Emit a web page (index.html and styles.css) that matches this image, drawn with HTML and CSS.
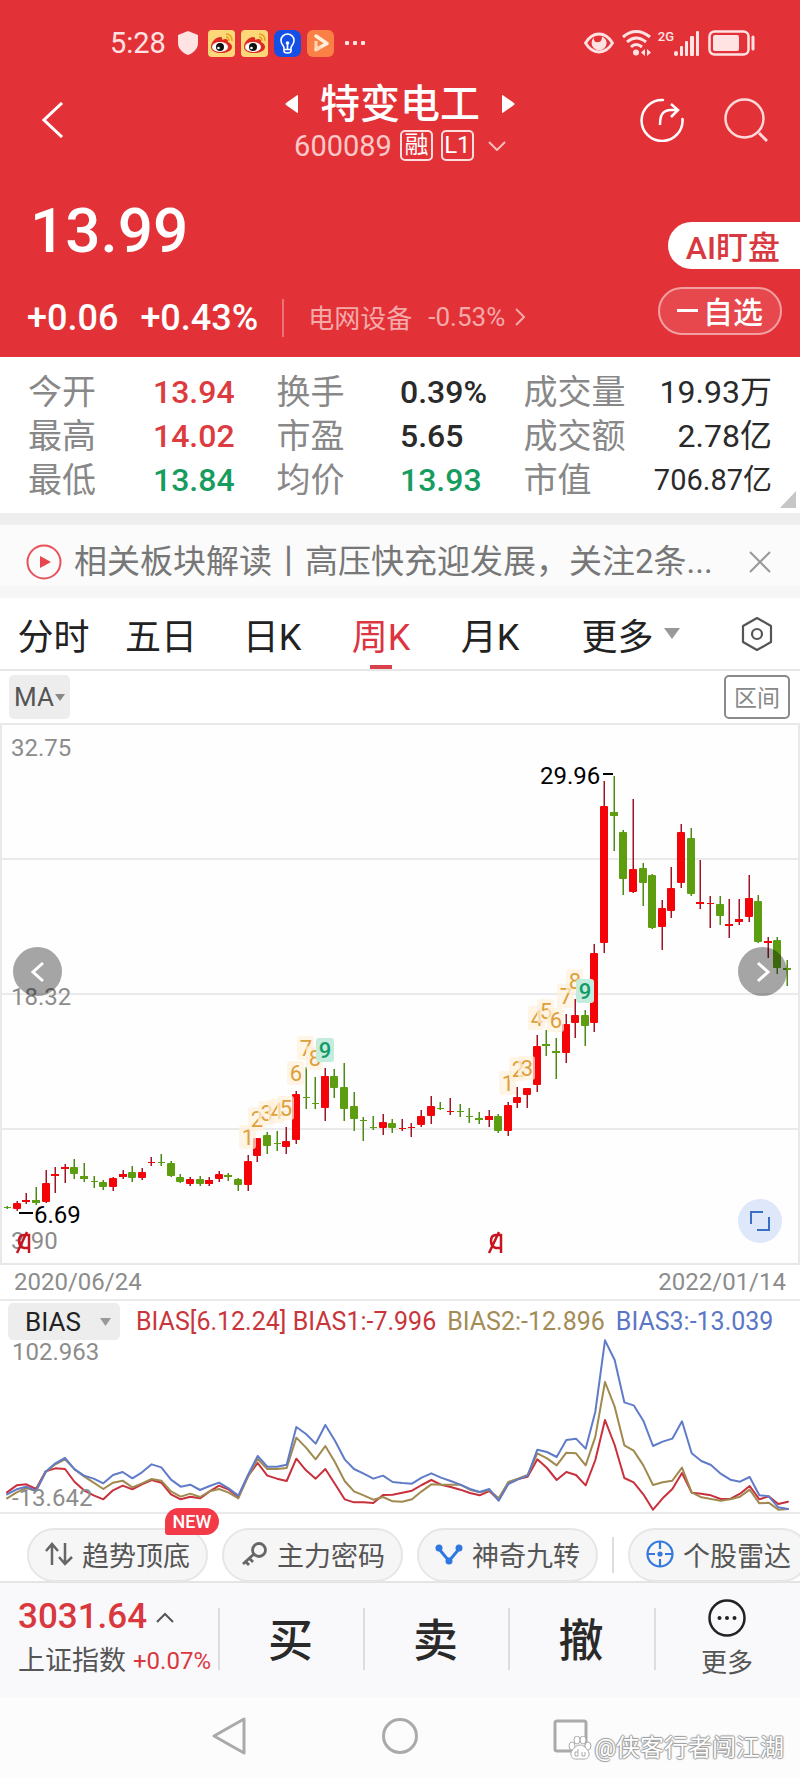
FILE: index.html
```html
<!DOCTYPE html>
<html lang="zh-CN">
<head>
<meta charset="utf-8">
<meta name="viewport" content="width=device-width, initial-scale=1">
<title>特变电工 600089</title>
<link rel="stylesheet" href="styles.css">
</head>
<body>
<header class="hero">
  <div class="status">
    <span class="clock">5:28</span>
    <svg class="shield" width="22" height="26" viewBox="0 0 22 26"><path d="M11 1 21 5V13C21 19 16 23 11 25 6 23 1 19 1 13V5Z" fill="#ffe3e3"/></svg>
    <svg class="app" width="27" height="27" viewBox="0 0 27 27"><use href="#weibo"/></svg>
    <svg class="app" width="27" height="27" viewBox="0 0 27 27"><use href="#weibo"/></svg>
    <svg class="app" width="27" height="27" viewBox="0 0 27 27"><rect width="27" height="27" rx="7" fill="#1450e6"/><path d="M10 18C10 15.500 7 14.500 7 10.500A6.500 6.500 0 0 1 20 10.500C20 14.500 17 15.500 17 18V21Q17 23 13.500 23T10 21ZM10 19.500H17M13.500 19V12" fill="none" stroke="#fff" stroke-width="1.600"/><circle cx="13.500" cy="13" r="1.800" fill="#fff"/></svg>
    <svg class="app" width="27" height="27" viewBox="0 0 27 27"><rect width="27" height="27" rx="6" fill="#fb8045"/><path d="M9 6 20 13.500 9 19.500" fill="none" stroke="#fff0dc" stroke-width="3.500" stroke-linejoin="round" stroke-linecap="round"/><path d="M9 11V20L14 17" fill="none" stroke="#ffd9b8" stroke-width="3" stroke-linejoin="round"/></svg>
    <svg class="dots" width="20" height="6" viewBox="0 0 20 6" fill="#ffe3e3"><rect y="1" width="4" height="4" rx="1"/><rect x="8" y="1" width="4" height="4" rx="1"/><rect x="16" y="1" width="4" height="4" rx="1"/></svg>
    <span class="grow"></span>
    <svg width="30" height="22" viewBox="0 0 30 22"><path d="M1.500 11Q7 2 15 2T28.500 11Q23 20 15 20T1.500 11Z" fill="none" stroke="#ffe3e3" stroke-width="2.800"/><path d="M12 4A7.500 7.500 0 1 0 22 8 Q20 5 18 4.500C18 8 17 10 14 10A3 3 0 0 1 12 4Z" fill="#ffe3e3"/></svg>
    <svg class="wifi" width="30" height="26" viewBox="0 0 30 26"><g fill="none" stroke="#ffe3e3" stroke-width="3"><path d="M1 7Q14-4 28 7"/><path d="M5 12Q14 4 24 12"/><path d="M9 17Q14 12 20 17"/></g><circle cx="14" cy="22.500" r="3" fill="#ffe3e3"/><path d="M23 19V26L19 22.500ZM25 19V26L29 22.500Z" fill="#ffe3e3"/></svg>
    <span class="net">2G</span>
    <svg class="signal" width="26" height="25" viewBox="0 0 26 25" fill="#ffe3e3"><rect y="20" width="4" height="5" rx="2"/><rect x="6" y="15" width="3" height="10" rx="1"/><rect x="11" y="10" width="3" height="15" rx="1"/><rect x="16" y="5" width="4" height="20" rx="1"/><rect x="22" width="3" height="25" rx="1"/></svg>
    <svg width="47" height="26" viewBox="0 0 47 26"><rect x="1.500" y="1.500" width="39" height="23" rx="5" fill="none" stroke="#ffe3e3" stroke-width="2.500"/><rect x="5" y="5" width="26" height="16" rx="2" fill="#ffe3e3"/><path d="M45 7V19" stroke="#ffe3e3" stroke-width="3" stroke-linecap="round"/></svg>
  </div>
  <div class="titlebar">
    <button class="plain back" aria-label="返回"><svg width="22" height="36" viewBox="0 0 22 36"><path d="M20 1 2 18 20 35" fill="none" stroke="#fff" stroke-width="3"/></svg></button>
    <div class="heading">
      <div class="name-row">
        <button class="plain" aria-label="上一只"><svg width="14" height="20" viewBox="0 0 14 20"><path d="M13 2V18Q13 20 11 18L1 11Q0 10 1 9L11 2Q13 0 13 2Z" fill="#fff"/></svg></button>
        <h1>特变电工</h1>
        <button class="plain" aria-label="下一只"><svg width="14" height="20" viewBox="0 0 14 20"><path d="M1 2V18Q1 20 3 18L13 11Q14 10 13 9L3 2Q1 0 1 2Z" fill="#fff"/></svg></button>
      </div>
      <div class="code-row">
        <span class="code">600089</span><span class="tag">融</span><span class="tag">L1</span>
        <svg class="chev" width="18" height="10" viewBox="0 0 18 10"><path d="M1 1 9 9 17 1" fill="none" stroke="#fbbcbc" stroke-width="2"/></svg>
      </div>
    </div>
    <div class="actions">
      <button class="plain" aria-label="分享"><svg width="44" height="44" viewBox="0 0 44 44" fill="none" stroke="#fff" stroke-width="2.500"><path d="M23 2A20.500 20.500 0 1 0 42.500 21" stroke-linecap="round"/><path d="M20 27C20 18 22 12 31 12H37M31 6 38 12 31 19"/></svg></button>
      <button class="plain" aria-label="搜索"><svg width="44" height="44" viewBox="0 0 44 44" fill="none" stroke="#ffd9d9" stroke-width="2.500"><circle cx="20.500" cy="20.500" r="19"/><path d="M35 35 43 43" stroke-width="3"/></svg></button>
    </div>
  </div>
  <div class="quote">
    <div>
      <div class="price">13.99</div>
      <div class="change">
        <span>+0.06</span><span class="pct">+0.43%</span>
        <a class="sector" href="#sector">电网设备<span class="sector-pct">-0.53%</span><svg width="10" height="18" viewBox="0 0 10 18"><path d="M1 1 9 9 1 17" fill="none" stroke="#f5a9a9" stroke-width="2"/></svg></a>
      </div>
    </div>
    <div class="side">
      <button class="ai">AI盯盘</button>
      <button class="watch"><i class="minus"></i>自选</button>
    </div>
  </div>
</header>

<section class="stats">
  <table>
    <colgroup><col class="c1"><col class="c2"><col class="c3"><col class="c4"><col class="c5"><col></colgroup>
    <tr><th>今开</th><td class="up">13.94</td><th>换手</th><td>0.39%</td><th>成交量</th><td class="end">19.93万</td></tr>
    <tr><th>最高</th><td class="up">14.02</td><th>市盈</th><td>5.65</td><th>成交额</th><td class="end">2.78亿</td></tr>
    <tr><th>最低</th><td class="down">13.84</td><th>均价</th><td class="down">13.93</td><th>市值</th><td class="end small">706.87亿</td></tr>
  </table>
  <svg class="corner" width="16" height="17" viewBox="0 0 16 17"><path d="M16 0V17H0Z" fill="#c6c6c6"/></svg>
</section>

<section class="news">
  <svg width="36" height="36" viewBox="0 0 36 36"><circle cx="18" cy="18" r="16.500" fill="none" stroke="#e8505a" stroke-width="2"/><path d="M14 12 25 18 14 24Z" fill="#e8454f"/></svg>
  <a href="#news">相关板块解读丨高压快充迎发展，关注2条...</a>
  <button class="plain" aria-label="关闭"><svg width="22" height="22" viewBox="0 0 22 22"><path d="M1 1 21 21M21 1 1 21" stroke="#999" stroke-width="2"/></svg></button>
</section>

<nav class="tabs">
  <button>分时</button><button>五日</button><button>日K</button><button class="on">周K</button><button>月K</button>
  <button class="more">更多<svg width="16" height="11" viewBox="0 0 16 11"><path d="M0 0H16L8 11Z" fill="#999"/></svg></button>
  <button aria-label="设置"><svg width="34" height="36" viewBox="0 0 34 36" fill="none" stroke="#555" stroke-width="2.200"><path d="M17 2 31 10V26L17 34 3 26V10Z" stroke-linejoin="round"/><circle cx="17" cy="18" r="5"/></svg></button>
</nav>

<div class="tools">
  <span class="picker ma"><select aria-label="主图指标"><option>MA</option></select><svg width="10" height="7" viewBox="0 0 10 7"><path d="M0 0H10L5 7Z" fill="#888"/></svg></span>
  <button class="range">区间</button>
</div>

<section class="kline">
  <svg id="kline" viewBox="0 723 800 542" role="img" aria-label="周K线">
    <g stroke="#e8e8e8" stroke-width="2" fill="none"><rect x="1" y="724" width="798" height="540" fill="#fefefe"/><path d="M0 859H800M0 994H800M0 1129H800" stroke="#eaeaea"/></g>
    <g class="axis"><text x="11" y="756">32.75</text><text x="11" y="1005">18.32</text><text x="11" y="1249">3.90</text></g>
    <g id="candles"></g>
    <g id="turns" class="turns"></g>
    <path d="M603 774H613M19 1213H33" stroke="#000" stroke-width="2"/>
    <g class="mark"><text x="540" y="784">29.96</text><text x="34" y="1223">6.69</text></g>
    <g fill="none" stroke="#c8141e" stroke-width="2.500"><path id="ex" d="M501 1253V1235H496Q491 1235 491 1241T496 1248H501M489 1253 499 1232"/><use href="#ex" x="-472"/></g>
  </svg>
  <button class="step prev" aria-label="向前"><svg width="14" height="22" viewBox="0 0 14 22"><path d="M12 2 2 11 12 20" fill="none" stroke="#fff" stroke-width="3"/></svg></button>
  <button class="step next" aria-label="向后"><svg width="14" height="22" viewBox="0 0 14 22"><path d="M2 2 12 11 2 20" fill="none" stroke="#fff" stroke-width="3"/></svg></button>
  <button class="expand" aria-label="全屏"><svg width="22" height="22" viewBox="0 0 22 22" fill="none" stroke="#3b6fc4" stroke-width="2"><path d="M2 14V2H14M20 7V20H8"/></svg></button>
</section>
<div class="dates"><time>2020/06/24</time><time>2022/01/14</time></div>

<section class="bias">
  <svg id="bias" viewBox="0 33 2400 633" role="img" aria-label="BIAS"></svg>
  <div class="bias-head">
    <span class="picker ind"><select aria-label="副图指标"><option>BIAS</option></select><svg width="11" height="8" viewBox="0 0 11 8"><path d="M0 0H11L5.500 8Z" fill="#999"/></svg></span>
    <span class="b1">BIAS[6.12.24] BIAS1:-7.996</span><span class="b2">BIAS2:-12.896</span><span class="b3">BIAS3:-13.039</span>
  </div>
  <span class="high">102.963</span>
  <span class="low">-13.642</span>
</section>

<div class="chips">
  <button><svg width="28" height="24" viewBox="0 0 28 24" fill="none" stroke="#666" stroke-width="2.500"><path d="M7 23V3M1 9 7 2 13 9M20 1V21M14 15 20 22 27 15"/></svg>趋势顶底<b class="new">NEW</b></button>
  <button><svg width="28" height="24" viewBox="0 0 28 24" fill="none" stroke="#666" stroke-width="2.800"><circle cx="19" cy="8" r="6.500"/><path d="M14 12 3 22M9 16 13 20M5 19 9 23"/></svg>主力密码</button>
  <button><svg width="28" height="24" viewBox="0 0 28 24"><path d="M4 7 14 19 24 7" fill="none" stroke="#2e78e0" stroke-width="3"/><g fill="#2e78e0"><circle cx="4" cy="6" r="3.500"/><circle cx="14" cy="19" r="3.500"/><circle cx="24" cy="6" r="3.500"/></g></svg>神奇九转</button>
  <i class="bar"></i>
  <button><svg width="28" height="28" viewBox="0 0 28 28" fill="none" stroke="#3579dc" stroke-width="2.200"><circle cx="14" cy="14" r="12.500"/><path d="M14 2V9M14 19V26M2 14H9M19 14H26"/><circle cx="14" cy="14" r="1.500" fill="#3579dc"/></svg>个股雷达</button>
</div>

<footer>
  <div class="trade">
    <button class="index"><span class="value">3031.64<svg width="18" height="11" viewBox="0 0 18 11"><path d="M1 10 9 2 17 10" fill="none" stroke="#555" stroke-width="2"/></svg></span><span class="label">上证指数<em>+0.07%</em></span></button>
    <button class="act">买</button><button class="act">卖</button><button class="act">撤</button>
    <button class="etc"><svg width="38" height="38" viewBox="0 0 38 38"><circle cx="19" cy="19" r="17.500" fill="none" stroke="#222" stroke-width="2.500"/><g fill="#222"><circle cx="11.500" cy="19" r="2"/><circle cx="19" cy="19" r="2"/><circle cx="26.500" cy="19" r="2"/></g></svg>更多</button>
  </div>
  <div class="sysnav">
    <button class="plain" aria-label="返回"><svg width="36" height="40" viewBox="0 0 36 40"><path d="M33 3V37L3 20Z" fill="none" stroke="#aaa" stroke-width="3" stroke-linejoin="round"/></svg></button>
    <button class="plain" aria-label="主屏"><svg width="36" height="40" viewBox="0 0 36 40"><circle cx="18" cy="20" r="16.500" fill="none" stroke="#aaa" stroke-width="3"/></svg></button>
    <button class="plain" aria-label="最近"><svg width="36" height="40" viewBox="0 0 36 40"><rect x="2" y="5" width="31" height="30" rx="2" fill="none" stroke="#aaa" stroke-width="3"/></svg></button>
    <div class="credit"><svg width="24" height="24" viewBox="0 0 24 24" fill="#fff" stroke="#aaa"><ellipse cx="4" cy="10" rx="3" ry="4"/><ellipse cx="9" cy="4" rx="3" ry="4"/><ellipse cx="15" cy="4" rx="3" ry="4"/><ellipse cx="20" cy="10" rx="3" ry="4"/><path d="M12 9C8 9 2 15 3 19 4 24 8 23 12 23S20 24 21 19C22 15 16 9 12 9Z"/><path d="M10 13V20H7V16H10M14 16V20H17V16" fill="none"/></svg>@侠客行者闯江湖</div>
  </div>
</footer>

<svg class="defs" width="0" height="0"><defs><g id="weibo"><rect width="27" height="27" rx="4" fill="#fdd878"/><path d="M3 17C3 11 9 7 12 7Q15 7 14 10 20 7 20 12 24 14 24 17C24 21 18 23 13 23S3 21 3 17Z" fill="#dd2a22"/><ellipse cx="12" cy="17" rx="8" ry="5" fill="#fff"/><circle cx="12" cy="17" r="4" fill="#111"/><circle cx="10.500" cy="18" r="1.300" fill="#fff"/><path d="M18 4Q24 4 24 11M18 7Q21 7 21 11" fill="none" stroke="#e9a020" stroke-width="1.500"/></g></defs></svg>
<script src="chart.js"></script>
</body>
</html>
```
FILE: styles.css
```css
* { box-sizing: border-box; }
body { margin: 0; overflow-x: hidden; background: #fff; color: #333; font-family: Roboto, "Noto Sans CJK SC", sans-serif; }
button { border: 0; padding: 0; margin: 0; background: none; color: inherit; font: inherit; white-space: nowrap; }
a { color: inherit; text-decoration: none; }
svg { display: block; flex: none; }
.plain { display: flex; }
.defs { position: absolute; }
.grow { flex: 1; }

.hero { background: #e33237; color: #fff; padding-bottom: 19px; }
.status { display: flex; align-items: center; height: 86px; padding: 0 45px 0 110px; color: #ffe3e3; }
.clock { font-size: 29px; margin-right: 11px; }
.shield { margin-right: 9px; }
.app { margin-right: 6px; }
.dots { margin-left: 5px; }
.wifi { margin: 0 6px 0 8px; }
.net { font-size: 13px; line-height: 14px; font-weight: 500; align-self: flex-start; margin-top: 30px; }
.signal { margin-right: 8px; }
.titlebar { display: grid; grid-template-columns: 1fr auto 1fr; grid-template-rows: 68px; align-items: center; padding: 0 32px; }
.back { margin-left: 10px; }
.heading { padding-top: 8px; text-align: center; }
.name-row, .code-row { display: flex; align-items: center; justify-content: center; }
.name-row { gap: 21px; height: 43px; }
h1 { margin: 0; font-size: 40px; line-height: 43px; font-weight: 500; }
.code-row { height: 40px; gap: 8px; }
.code { font-size: 29px; color: #fcc8c8; }
.tag { border: 2px solid #fdd; border-radius: 5px; width: 33px; height: 31px; font-size: 24px; line-height: 27px; text-align: center; }
.chev { margin-left: 6px; }
.actions { display: flex; justify-content: flex-end; gap: 40px; }
.quote { display: grid; grid-template-columns: 1fr auto; padding-top: 36px; }
.price { font-size: 62px; line-height: 76px; font-weight: 500; padding: 3px 0 0 30px; }
.change { display: flex; align-items: center; height: 40px; margin-top: 29px; padding-left: 27px; font-size: 36px; font-weight: 500; }
.pct { margin-left: 22px; }
.sector { display: flex; align-items: center; margin-left: 24px; padding: 0 0 3px 24px; height: 38px; border-left: 2px solid #ec7478; font-size: 26px; font-weight: 400; color: #f5a9a9; }
.sector-pct { margin: 0 10px 0 16px; }
.side { display: flex; flex-direction: column; align-items: flex-end; padding-top: 32px; }
.ai { height: 47px; padding: 0 20px 3px 18px; border-radius: 24px 0 0 24px; background: #fff; color: #d83840; font-size: 32px; font-weight: 500; }
.watch { display: flex; align-items: center; justify-content: center; gap: 5px; width: 124px; height: 48px; margin: 18px 18px 0 0; padding-bottom: 2px; border: 2px solid #f3a0a3; border-radius: 24px; background: #e6484d; font-size: 30px; font-weight: 500; }
.minus { width: 21px; height: 3px; background: #fff; }

.stats { position: relative; padding: 13px 28px 11px; }
.stats table { width: 100%; table-layout: fixed; border-collapse: collapse; }
.stats tr { height: 44px; }
.stats th, .stats td { padding: 0; line-height: 44px; text-align: left; white-space: nowrap; }
.stats th { font-size: 34px; font-weight: 400; color: #888; }
.stats td { font-size: 32px; font-weight: 500; color: #2a2a2a; }
.stats .end { text-align: right; font-weight: 400; }
.stats .small { font-size: 29px; }
.stats .up { color: #dc3c40; }
.stats .down { color: #179c60; }
.c1 { width: 16.8%; } .c2, .c3, .c4, .c5 { width: 16.6%; }
.corner { position: absolute; right: 4px; bottom: 5px; }

.news { display: flex; align-items: center; height: 85px; padding: 13px 29px 0 26px; border-top: 12px solid #eee; border-bottom: 12px solid #f6f6f6; background: #fbfbfb; color: #777; }
.news a { flex: 1; margin-left: 12px; font-size: 33px; line-height: 40px; white-space: nowrap; }

.tabs { display: grid; grid-template-columns: 107fr 108fr 114fr 104fr 114fr 167fr 86fr; height: 73px; border-bottom: 2px solid #e6e6e6; font-size: 36px; color: #222; }
.tabs button { display: flex; align-items: center; justify-content: center; }
.tabs .on { color: #dd3440; background: linear-gradient(#d8404c, #d8404c) center bottom / 22px 4px no-repeat; }
.tabs .more { gap: 10px; }
.tools { display: flex; justify-content: space-between; align-items: center; height: 52px; padding: 0 10px 0 9px; }
.picker { display: flex; align-items: center; background: #ededed; border-radius: 5px; }
.picker select { appearance: none; border: 0; padding: 0; background: none; font: inherit; color: inherit; }
.ma { height: 44px; padding: 0 5px; font-size: 26px; color: #555; width: 61px; justify-content: space-between; }
.range { width: 66px; height: 44px; padding-bottom: 2px; border: 2px solid #8a8a8a; border-radius: 5px; font-size: 23px; color: #888; }

.kline { position: relative; }
.kline > svg { width: 100%; height: auto; }
.axis { font-size: 24px; fill: #8c8c8c; }
.mark { font-size: 24px; fill: #000; }
.turns { font-size: 22px; text-anchor: middle; fill: #dda03c; }
.turns .halo { fill: #fdf1dc; opacity: .7; }
.turns .nine { fill: #c4ecdc; }
.turns .last { fill: #129a68; font-weight: 500; }
.step { position: absolute; top: calc(50% - 47px); width: 49px; height: 49px; border-radius: 50%; background: rgba(0, 0, 0, .35); display: grid; place-items: center; }
.prev { left: 13px; }
.next { right: 13px; }
.expand { position: absolute; right: 18px; bottom: 22px; width: 44px; height: 44px; border-radius: 50%; background: #dfe7fa; display: grid; place-items: center; }
.dates { display: flex; justify-content: space-between; align-items: center; height: 34px; padding: 0 14px; font-size: 24px; color: #8c8c8c; }

.bias { position: relative; border: 2px solid #eaeaea; border-width: 2px 0; }
.bias > svg { width: 100%; height: auto; fill: none; stroke-width: 6; stroke-linejoin: round; stroke-linecap: round; }
.bias-head { position: absolute; inset: 2px 0 auto 8px; display: flex; align-items: center; height: 37px; font-size: 25px; }
.ind { width: 112px; height: 37px; padding: 0 9px 0 17px; font-size: 26px; color: #222; justify-content: space-between; }
.b1 { margin-left: 16px; color: #c8363c; }
.b2 { margin-left: 11px; color: #a38c55; }
.b3 { margin-left: 11px; color: #5c76c6; }
.high, .low { position: absolute; left: 12px; font-size: 24px; line-height: 28px; color: #8c8c8c; }
.high { top: 37px; }
.low { bottom: 0; }

.chips { display: flex; height: 69px; padding: 14px 0 0 27px; gap: 14px; border-bottom: 2px solid #e4e4e4; font-size: 27px; color: #555; }
.chips button { position: relative; display: flex; align-items: center; justify-content: center; gap: 9px; flex: none; width: 181px; height: 54px; padding-bottom: 2px; border: 2px solid #e6e6e6; border-radius: 27px; background: #f6f6f6; }
.bar { flex: none; width: 2px; height: 36px; margin-top: 9px; background: #ddd; }
.new { position: absolute; top: -22px; right: -13px; width: 54px; height: 27px; border-radius: 14px 14px 14px 3px; background: #f23a48; color: #fff; font-size: 18px; line-height: 27px; font-weight: 500; }

.trade { display: grid; grid-template-columns: 218fr 145fr 145fr 146fr 146fr; height: 114px; background: #f9f9fb; }
.trade button { position: relative; display: flex; align-items: center; justify-content: center; }
.trade button + button { background: linear-gradient(#ddd, #ddd) left 25px / 2px 62px no-repeat; }
.trade .index { flex-direction: column; align-items: flex-start; justify-content: flex-start; padding: 12px 0 0 18px; }
.value { display: flex; align-items: center; gap: 9px; font-size: 35px; line-height: 44px; font-weight: 500; color: #d8383e; }
.label { display: flex; align-items: center; gap: 7px; font-size: 27px; line-height: 44px; color: #555; }
.label em { font-size: 24px; font-style: normal; color: #d8383e; }
.trade .act { padding-bottom: 6px; font-size: 45px; font-weight: 500; color: #2a2a2a; }
.trade .etc { flex-direction: column; gap: 8px; font-size: 26px; line-height: 36px; color: #555; }
.sysnav { position: relative; display: flex; justify-content: center; align-items: center; gap: 135px; height: 81px; padding-bottom: 3px; background: #fcfcfc; }
.credit { position: absolute; right: 16px; bottom: 16px; display: flex; align-items: center; gap: 2px; font-size: 24px; line-height: 28px; color: #fff; text-shadow: 1px 0 1px #999, -1px 0 1px #999, 0 1px 1px #999, 0 -1px 1px #999; }
```
FILE: chart.js
```js
const NS = 'http://www.w3.org/2000/svg';
function add(parent, tag, attrs, text) {
  const el = document.createElementNS(NS, tag);
  for (const k in attrs) el.setAttribute(k, attrs[k]);
  if (text) el.textContent = text;
  parent.appendChild(el);
  return el;
}

// Each candle: wick top, wick bottom, body top, body bottom, r (rise) or g (fall).
const candles = `1206 1209 1207 1208 g|1201 1211 1203 1209 r|1193 1204 1200 1202 r|1187 1205 1200 1203 g|1170 1203 1183 1202 r|1167 1193 1174 1176 r|1164 1183 1167 1169 r|1159 1179 1167 1174 g|1163 1182 1176 1179 g|1176 1188 1181 1182 g
1180 1190 1182 1187 g|1177 1191 1178 1187 r|1170 1179 1174 1177 r|1166 1182 1172 1178 g|1168 1180 1172 1178 r|1157 1166 1162 1163 r|1154 1166 1162 1163 g|1161 1177 1163 1176 g|1174 1183 1177 1182 g|1177 1186 1179 1184 r
1176 1186 1179 1184 g|1177 1186 1180 1184 r|1171 1182 1174 1179 r|1173 1181 1175 1177 g|1178 1191 1179 1185 g|1155 1191 1161 1185 r|1138 1162 1138 1156 r|1132 1154 1135 1146 g|1131 1151 1143 1144 g|1127 1154 1141 1147 r
1091 1144 1094 1140 r|1067 1109 1097 1098 g|1077 1109 1103 1104 g|1068 1121 1076 1108 r|1069 1098 1076 1088 g|1063 1121 1087 1109 g|1092 1131 1106 1119 g|1117 1141 1120 1121 g|1116 1130 1127 1128 g|1114 1135 1122 1128 r
1119 1133 1123 1128 g|1119 1131 1128 1129 r|1123 1137 1127 1128 r|1110 1127 1116 1125 r|1096 1124 1106 1116 r|1102 1110 1108 1109 g|1098 1115 1111 1112 r|1104 1117 1111 1112 g|1108 1123 1116 1117 g|1112 1124 1118 1120 g
1110 1127 1116 1120 r|1114 1133 1116 1131 g|1102 1136 1105 1131 r|1087 1108 1097 1103 r|1088 1108 1088 1095 r|1035 1092 1046 1085 r|1030 1056 1044 1046 g|1038 1079 1051 1053 g|1014 1063 1024 1053 r|999 1038 1015 1023 r
1010 1046 1015 1026 g|944 1032 953 1023 r|781 953 806 943 r|776 851 812 816 g|830 895 832 879 g|799 893 869 892 r|863 906 868 883 g|874 929 875 928 g|900 950 908 927 r|867 918 888 911 r
824 888 832 883 r|828 896 838 894 g|860 909 902 904 r|896 928 903 904 r|896 925 904 916 g|899 938 924 926 r|899 925 919 922 r|875 922 898 917 r|895 943 901 942 g|937 958 941 943 r
937 974 940 968 g|960 986 968 970 g`.split(/[|\n]/);
const body = document.getElementById('candles');
candles.forEach((row, i) => {
  const [hi, lo, top, bottom, kind] = row.split(' ');
  const x = Math.round(7 + i * 9.63);
  add(body, 'rect', { x: x - 0.5, y: hi, width: 1.5, height: lo - hi, fill: kind === 'r' ? '#a01428' : '#4c8a14' });
  const h = bottom - top;
  add(body, 'rect', { x: x - (h < 2 ? 3 : 4), y: top, width: h < 2 ? 7 : 8, height: h, rx: h > 4 ? 1 : 0, fill: kind === 'r' ? '#f40408' : '#5c9e10' });
});

// Nine-turn counters: digit, centre x, centre y.
const turns = [[1, 248, 1137], [2, 257, 1119], [3, 267, 1113], [4, 277, 1111], [5, 286, 1108], [6, 296, 1073], [7, 306, 1048], [8, 315, 1058], [9, 325, 1050],
  [1, 508, 1083], [2, 518, 1069], [3, 527, 1068], [4, 537, 1018], [5, 546, 1011], [6, 556, 1020], [7, 566, 996], [8, 575, 981], [9, 585, 991]];
const layer = document.getElementById('turns');
turns.forEach(([n, x, y]) => {
  add(layer, 'rect', { x: x - 9, y: y - 12, width: n === 9 ? 18 : 17, height: 24, rx: 3, class: n === 9 ? 'nine' : 'halo' });
  add(layer, 'text', n === 9 ? { x, y: y + 8, class: 'last' } : { x, y: y + 8 }, String(n));
});

const series = {
  '#c8303c': '607 586 583 597 544 535 537 576 601 616 628 601 587 598 583 570 578 613 628 620 625 604 587 599 620 558 519 557 566 573 506 541 566 537 582 628 637 637 639 615 614 608 602 585 570 584 591 599 609 616 603 630 580 567 560 508 534 570 546 555 586 510 390 465 564 577 613 659 625 597 549 608 611 616 627 627 611 588 628 619 642 635',
  '#a08a50': '625 607 594 603 547 523 508 538 559 578 597 578 572 592 580 567 572 604 620 611 621 604 597 608 625 560 507 537 537 534 443 473 508 468 517 573 604 616 629 621 634 635 628 604 583 584 584 584 599 607 601 625 576 566 555 490 505 526 488 490 526 440 276 350 466 482 526 585 577 572 533 607 622 627 632 628 620 599 640 638 659 657',
  '#607cc8': '613 598 590 603 545 520 504 538 557 566 580 555 546 565 547 523 532 569 590 584 600 588 578 595 617 555 498 530 530 524 411 432 461 405 452 508 537 551 566 557 576 579 581 563 550 563 573 584 597 606 597 632 582 568 557 479 486 501 450 446 476 365 151 210 337 346 392 468 455 446 394 490 513 525 551 569 575 561 616 619 652 657'
};
const plot = document.getElementById('bias');
for (const color in series) {
  const points = series[color].split(' ').map((y, i) => Math.round(21 + i * 28.93) + ',' + y).join(' ');
  add(plot, 'polyline', { points, stroke: color });
}
```
